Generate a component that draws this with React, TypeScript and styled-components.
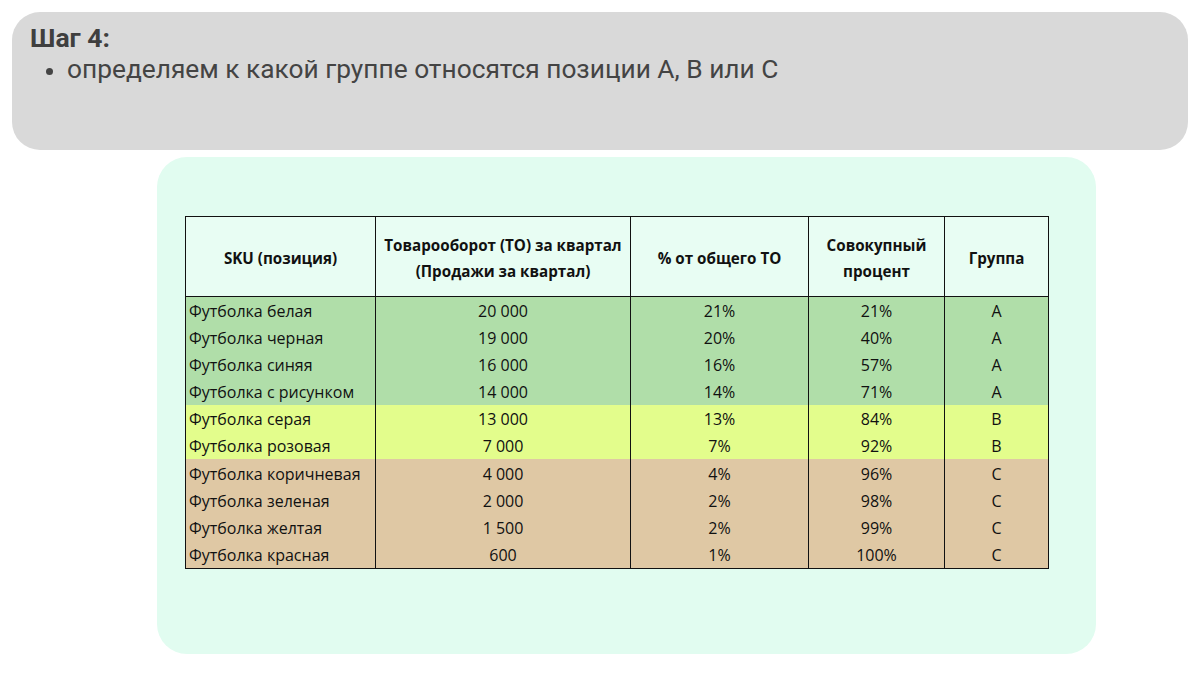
import React from "react";
import styled, { createGlobalStyle } from "styled-components";

const Global = createGlobalStyle`
  html, body { margin: 0; padding: 0; background: #ffffff; }
  body { width: 1200px; height: 675px; overflow: hidden; }
`;

const Page = styled.div`
  width: 1200px;
  height: 675px;
  box-sizing: border-box;
  padding: 12px 12px 0 12px;
  display: flex;
  flex-direction: column;
  align-items: flex-start;
  gap: 7px;
`;

const Header = styled.div`
  box-sizing: border-box;
  width: 1176px;
  height: 138px;
  background: #d9d9d9;
  border-radius: 28px;
  padding: 10px 18px;
  font-family: Roboto, "Noto Sans", sans-serif;
  color: #444444;
`;

const Title = styled.div`
  font-size: 26.5px;
  font-weight: 700;
  line-height: 31px;
  color: #3f3f3f;
`;

const BulletList = styled.ul`
  margin: 0;
  padding: 0 0 0 16px;
  list-style: none;
`;

const Bullet = styled.li`
  position: relative;
  font-size: 26.3px;
  line-height: 32px;
  padding-left: 21px;
  &::before {
    content: "";
    position: absolute;
    left: 0;
    top: 15px;
    width: 7px;
    height: 7px;
    border-radius: 50%;
    background: #444444;
  }
`;

const Card = styled.div`
  box-sizing: border-box;
  width: 939px;
  height: 497px;
  margin-left: 145px;
  background: #e1fcf0;
  border-radius: 30px;
  padding: 59px 0 0 28px;
`;

const Table = styled.table`
  border-collapse: collapse;
  font-family: "Open Sans", "Noto Sans", sans-serif;
  color: #111;
  border: 1.5px solid #111;
`;

const HeadCell = styled.th<{ $w: number }>`
  width: ${(p) => p.$w}px;
  height: 80px;
  box-sizing: border-box;
  border: 1.5px solid #111;
  background: #e8fdf3;
  font-weight: 700;
  font-size: 15.2px;
  line-height: 26px;
  text-align: center;
  padding: 2px 2px 0;
  white-space: nowrap;
`;

const Row = styled.tr<{ $bg: string }>`
  background: ${(p) => p.$bg};
`;

const Cell = styled.td<{ $left?: boolean }>`
  height: 27.1px;
  box-sizing: border-box;
  padding: 2px 3px 0;
  border-left: 1.5px solid #111;
  border-right: 1.5px solid #111;
  text-align: ${(p) => (p.$left ? "left" : "center")};
  white-space: nowrap;
  font-size: 16px;
  line-height: 25px;
`;

const GREEN = "#b0dea9";
const YELLOW = "#e3fd8c";
const TAN = "#dfc8a4";

const rows: [string, string, string, string, string, string][] = [
  ["Футболка белая", "20 000", "21%", "21%", "A", GREEN],
  ["Футболка черная", "19 000", "20%", "40%", "A", GREEN],
  ["Футболка синяя", "16 000", "16%", "57%", "A", GREEN],
  ["Футболка с рисунком", "14 000", "14%", "71%", "A", GREEN],
  ["Футболка серая", "13 000", "13%", "84%", "B", YELLOW],
  ["Футболка розовая", "7 000", "7%", "92%", "B", YELLOW],
  ["Футболка коричневая", "4 000", "4%", "96%", "C", TAN],
  ["Футболка зеленая", "2 000", "2%", "98%", "C", TAN],
  ["Футболка желтая", "1 500", "2%", "99%", "C", TAN],
  ["Футболка красная", "600", "1%", "100%", "C", TAN],
];

export default function App() {
  return (
    <>
      <Global />
      <Page>
        <Header>
          <Title>Шаг 4:</Title>
          <BulletList>
            <Bullet>определяем к какой группе относятся позиции А, В или С</Bullet>
          </BulletList>
        </Header>
        <Card>
          <Table>
            <thead>
              <tr>
                <HeadCell $w={190}>SKU (позиция)</HeadCell>
                <HeadCell $w={255}>
                  Товарооборот (ТО) за квартал
                  <br />
                  (Продажи за квартал)
                </HeadCell>
                <HeadCell $w={178}>% от общего ТО</HeadCell>
                <HeadCell $w={136}>
                  Совокупный
                  <br />
                  процент
                </HeadCell>
                <HeadCell $w={104}>Группа</HeadCell>
              </tr>
            </thead>
            <tbody>
              {rows.map((r) => (
                <Row key={r[0]} $bg={r[5]}>
                  <Cell $left>{r[0]}</Cell>
                  <Cell>{r[1]}</Cell>
                  <Cell>{r[2]}</Cell>
                  <Cell>{r[3]}</Cell>
                  <Cell>{r[4]}</Cell>
                </Row>
              ))}
            </tbody>
          </Table>
        </Card>
      </Page>
    </>
  );
}
